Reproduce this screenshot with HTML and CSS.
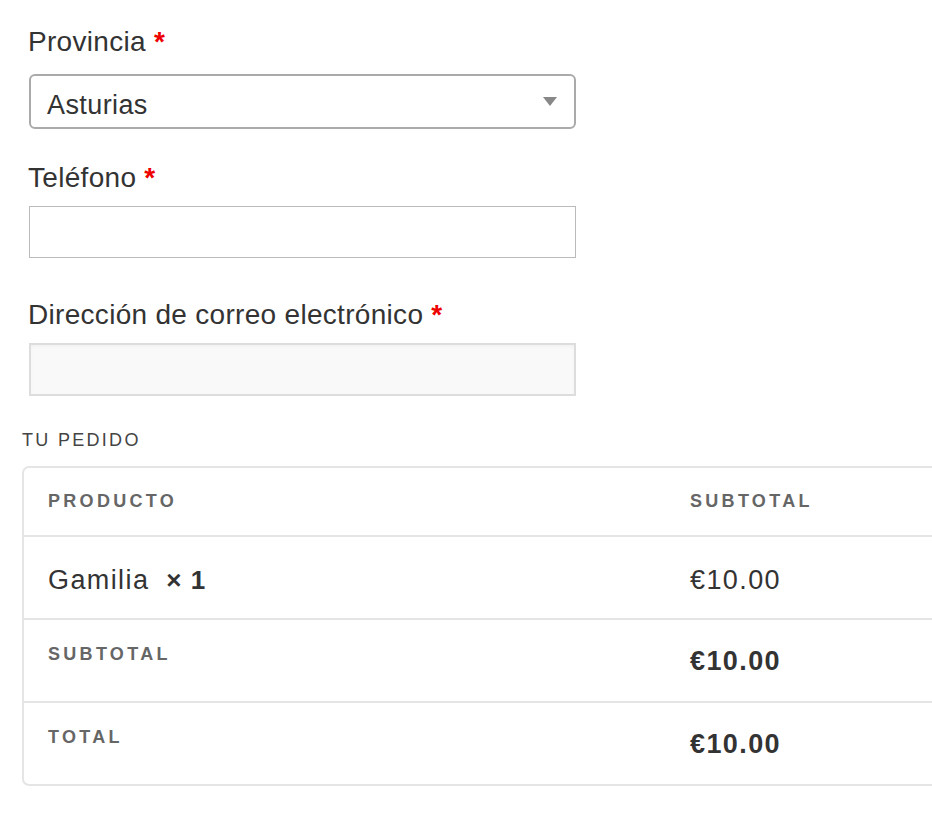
FILE: index.html
```html
<!DOCTYPE html>
<html lang="es">
<head>
<meta charset="utf-8">
<title>Checkout</title>
<link rel="stylesheet" href="styles.css">
</head>
<body>
<div class="page">
  <div class="field field-province">
    <label class="label">Provincia <abbr class="req">*</abbr></label>
    <div class="select">
      <span class="select-value">Asturias</span>
      <svg class="select-arrow" width="14" height="10" viewBox="0 0 14 10"><path d="M0 0H14L7 9Z" fill="#888"/></svg>
    </div>
  </div>
  <div class="field field-phone">
    <label class="label">Teléfono <abbr class="req">*</abbr></label>
    <div class="input"></div>
  </div>
  <div class="field field-email">
    <label class="label">Dirección de correo electrónico <abbr class="req">*</abbr></label>
    <div class="input input-disabled"></div>
  </div>
  <h3 class="order-title">TU PEDIDO</h3>
  <div class="order-wrap">
    <div class="order">
      <div class="row row-head">
        <div class="th">PRODUCTO</div>
        <div class="th">SUBTOTAL</div>
      </div>
      <div class="row row-item">
        <div class="td">Gamilia <strong class="qty">× 1</strong></div>
        <div class="td">€10.00</div>
      </div>
      <div class="row row-foot">
        <div class="th th-foot">SUBTOTAL</div>
        <div class="td td-strong">€10.00</div>
      </div>
      <div class="row row-foot row-last">
        <div class="th th-foot">TOTAL</div>
        <div class="td td-strong">€10.00</div>
      </div>
    </div>
  </div>
</div>
</body>
</html>
```
FILE: styles.css
```css
html, body {
  margin: 0;
  padding: 0;
  background: #fff;
  overflow: hidden;
}
body {
  font-family: "Liberation Sans", Arial, sans-serif;
  color: #333;
}
.page {
  padding: 25px 0 0 22px;
}
.field {
  width: 548px;
  padding-left: 6px;
}
.label {
  display: block;
  font-size: 28px;
  line-height: 34px;
  letter-spacing: 0.3px;
  color: #333;
}
.req {
  color: #e00;
  text-decoration: none;
  font-weight: bold;
  border: 0;
}
.field-province .label { margin-bottom: 15px; }
.field-province { margin-bottom: 32px; }
.field-phone .label { margin-bottom: 11px; }
.field-phone { margin-bottom: 40px; }
.field-email .label { margin-bottom: 11px; }
.field-email { margin-bottom: 33px; }
.select {
  box-sizing: border-box;
  height: 55px;
  margin-left: 1px;
  border: 2px solid #aaa;
  border-radius: 6px;
  display: flex;
  align-items: center;
  justify-content: space-between;
  padding: 0 17px 0 16px;
}
.select-value {
  font-size: 27px;
  letter-spacing: 0.4px;
  color: #333;
  padding-top: 7px;
}
.select-arrow {
  display: block;
}
.input {
  box-sizing: border-box;
  height: 52px;
  margin-left: 1px;
  border: 1px solid #bbb;
  background: #fff;
}
.input-disabled {
  height: 53px;
  border: 2px solid #ddd;
  background: #f9f9f9;
  box-shadow: inset 0 2px 3px rgba(0,0,0,0.03);
}
.order-title {
  margin: 0 0 15px;
  font-size: 18px;
  font-weight: normal;
  letter-spacing: 2.3px;
  line-height: 22px;
  color: #444;
}
.order-wrap {
  width: 930px;
}
.order {
  box-sizing: border-box;
  border: 2px solid #e5e5e5;
  border-radius: 7px;
  width: 940px;
}
.row {
  display: grid;
  grid-template-columns: 642px 1fr;
  border-top: 2px solid #e5e5e5;
}
.row-head {
  border-top: 0;
  height: 67px;
  align-items: center;
}
.row-item {
  height: 81px;
  align-items: center;
}
.row-item .td {
  padding-top: 5px;
}
.row-foot {
  height: 81px;
}
.th, .td {
  padding-left: 24px;
}
.th {
  font-size: 18px;
  font-weight: bold;
  letter-spacing: 3.3px;
  color: #666;
}
.td {
  font-size: 27px;
  letter-spacing: 1.4px;
  color: #333;
}
.qty {
  margin-left: 8px;
  font-size: 26px;
  letter-spacing: 1px;
}
.th-foot {
  padding-top: 24px;
}
.td-strong {
  font-weight: bold;
  padding-top: 26px;
}
```
